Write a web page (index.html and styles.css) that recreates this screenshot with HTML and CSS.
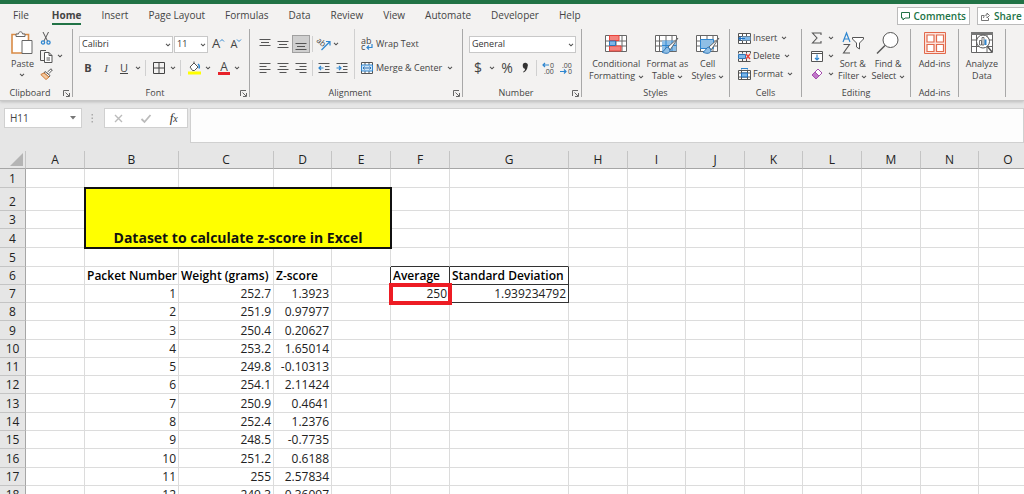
FILE: index.html
```html
<!DOCTYPE html>
<html lang="en">
<head>
  <meta charset="UTF-8">
  <title>Z-score workbook</title>
  <link rel="stylesheet" href="styles.css">
</head>
<body>
  <svg class="defs" aria-hidden="true">
    <symbol id="chev" viewBox="0 0 6 4"><path d="M1 .8l2 2 2-2" fill="none" stroke="#555" stroke-width="1.1"/></symbol>
    <symbol id="launch" viewBox="0 0 7 7"><path d="M.5 6V.5H6M2.5 2.5L6 6M6.5 3v3.5H3" fill="none" stroke="#666"/></symbol>
    <symbol id="grid" viewBox="0 0 22 17"><path d="M.5.5h21v16H.5zM.5 6h21M.5 11h21M4.500.5v16M11 .5v16M17 .5v16" fill="#fff" stroke="#666"/></symbol>
    <symbol id="brush" viewBox="0 0 18 18"><path d="M17 1L7 10l2 3z" fill="#fff" stroke="#666"/><path d="M7 10c-3 0-3 4-6 5 3 2 8 2 8-2z" fill="#8fbfe6" stroke="#2e75b6"/></symbol>
  </svg>

  <header class="ribbon">
    <div class="top">
      <nav class="tabs">
        <a href="#" class="file">File</a>
        <a href="#" class="active">Home</a>
        <a href="#">Insert</a>
        <a href="#">Page Layout</a>
        <a href="#">Formulas</a>
        <a href="#">Data</a>
        <a href="#">Review</a>
        <a href="#">View</a>
        <a href="#">Automate</a>
        <a href="#">Developer</a>
        <a href="#">Help</a>
      </nav>
      <button class="action"><svg width="9" height="9" viewBox="0 0 9 9"><path d="M.5.5h8v5.500H4l-2 2v-2H.5z" fill="none" stroke="#217346"/></svg>Comments</button>
      <button class="action share"><svg width="9" height="9" viewBox="0 0 9 9"><path d="M3 3.500H.5v5h7V6M2.500 6c0-2 1.500-3 3.500-3V1l2.500 2.500L6 6V4.500" fill="none" stroke="#666" stroke-width=".9"/></svg>Share</button>
    </div>

    <div class="groups">
      <section class="group clipboard">
        <div class="body">
          <button class="big">
            <svg width="22" height="24" viewBox="0 0 22 24"><path d="M1 3.500h16.500V22H1z" fill="#fff" stroke="#d98b45" stroke-width="1.600"/><path d="M5 5.500V3h2.500c0-3 4-3 4 0H14v2.500z" fill="#fff" stroke="#666"/><path d="M11 9.500h10v13H11z" fill="#fff" stroke="#666"/></svg>
            <span>Paste</span>
            <svg class="chev"><use href="#chev"/></svg>
          </button>
          <div class="stack">
            <button aria-label="Cut"><svg width="12" height="13" viewBox="0 0 12 13"><path d="M3 0l4.500 9M8.500 0L4 9" fill="none" stroke="#555"/><circle cx="3" cy="10.500" r="1.600" fill="none" stroke="#2e86d0" stroke-width="1.300"/><circle cx="8.500" cy="10.500" r="1.600" fill="none" stroke="#2e86d0" stroke-width="1.300"/></svg></button>
            <button aria-label="Copy"><svg width="13" height="13" viewBox="0 0 13 13"><path d="M5 10.500H.5V.5H6" fill="none" stroke="#555"/><path d="M4.500 2.500H9l3 3v7H4.500zM9 2.500v3h3M6.500 8h3.500M6.500 10h3.500" fill="#fff" stroke="#555"/></svg><svg class="chev"><use href="#chev"/></svg></button>
            <button aria-label="Format Painter"><svg width="13" height="12" viewBox="0 0 13 12"><path d="M7.500 4L11 .8 12.300 2 9 5.500" fill="#fff" stroke="#555"/><path d="M5 3.500l5 4-1 1.500-5-4z" fill="#fff" stroke="#555"/><path d="M4 5L.8 6.500 6 11.500 9 9z" fill="#f3c9a0" stroke="#d07a35"/></svg></button>
          </div>
        </div>
        <footer>Clipboard<svg class="launch"><use href="#launch"/></svg></footer>
      </section>

      <section class="group font">
        <div class="body rows">
          <div class="row">
            <span class="drop face"><select aria-label="Font"><option>Calibri</option></select><svg class="chev"><use href="#chev"/></svg></span>
            <span class="drop size"><select aria-label="Font size"><option>11</option></select><svg class="chev"><use href="#chev"/></svg></span>
            <button class="tool grow" aria-label="Increase font size">A<svg width="4" height="3" viewBox="0 0 4 3"><path d="M0 2.500l2-2 2 2" fill="none" stroke="#2e86d0"/></svg></button>
            <button class="tool shrink" aria-label="Decrease font size">A<svg width="4" height="3" viewBox="0 0 4 3"><path d="M0 .5l2 2 2-2" fill="none" stroke="#2e86d0"/></svg></button>
          </div>
          <div class="row">
            <button class="tool"><b>B</b></button>
            <button class="tool serif"><i>I</i></button>
            <button class="tool"><u>U</u></button>
            <svg class="chev"><use href="#chev"/></svg>
            <i class="bar"></i>
            <button class="tool" aria-label="Borders"><svg width="12" height="12" viewBox="0 0 12 12"><path d="M.5.5h11v11H.5zM6 .5v11M.5 6h11" fill="none" stroke="#444"/></svg></button>
            <svg class="chev"><use href="#chev"/></svg>
            <i class="bar"></i>
            <button class="tool" aria-label="Fill colour"><svg width="13" height="14" viewBox="0 0 13 14"><path d="M2 6l4-4 4 4-3.500 3.500H4.500zM6 2V.5" fill="#fff" stroke="#555"/><path d="M10 3c1.500 1 1.500 3 1 4.500" fill="none" stroke="#2e86d0" stroke-width="1.500"/><path d="M0 10.500h13v3H0z" fill="#ff0"/></svg></button>
            <svg class="chev"><use href="#chev"/></svg>
            <button class="tool colour" aria-label="Font colour">A</button>
            <svg class="chev"><use href="#chev"/></svg>
          </div>
        </div>
        <footer>Font<svg class="launch"><use href="#launch"/></svg></footer>
      </section>

      <section class="group align">
        <div class="body">
          <div class="rows pad">
            <div class="row">
              <button class="tool" aria-label="Top align"><svg width="12" height="14" viewBox="0 0 12 14"><path d="M.5 2.500h11M2 5.500h8M.5 8.500h11" stroke="#555"/></svg></button>
              <button class="tool" aria-label="Middle align"><svg width="12" height="14" viewBox="0 0 12 14"><path d="M.5 4.500h11M2 7.500h8M.5 10.500h11" stroke="#555"/></svg></button>
              <button class="tool pressed" aria-label="Bottom align"><svg width="12" height="14" viewBox="0 0 12 14"><path d="M.5 6.500h11M2 9.500h8M.5 12.500h11" stroke="#555"/></svg></button>
              <i class="bar"></i>
              <button class="tool" aria-label="Orientation"><svg width="14" height="13" viewBox="0 0 14 13"><text x="-1" y="7" font-size="8" transform="rotate(42 4 5)" fill="#444">ab</text><path d="M4.500 12L12.500 4M9 3.500h4v4" fill="none" stroke="#2e86d0" stroke-width="1.200"/></svg></button>
              <svg class="chev"><use href="#chev"/></svg>
            </div>
            <div class="row">
              <button class="tool" aria-label="Align left"><svg width="12" height="12" viewBox="0 0 12 12"><path d="M.5 1.500h11M.5 4.500h7M.5 7.500h11M.5 10.500h7" stroke="#555"/></svg></button>
              <button class="tool" aria-label="Centre"><svg width="12" height="12" viewBox="0 0 12 12"><path d="M.5 1.500h11M2.500 4.500h7M.5 7.500h11M2.500 10.500h7" stroke="#555"/></svg></button>
              <button class="tool" aria-label="Align right"><svg width="12" height="12" viewBox="0 0 12 12"><path d="M.5 1.500h11M4.500 4.500h7M.5 7.500h11M4.500 10.500h7" stroke="#555"/></svg></button>
              <i class="bar"></i>
              <button class="tool" aria-label="Decrease indent"><svg width="12" height="12" viewBox="0 0 12 12"><path d="M.5 1.500h11M7 4.500h4.500M7 7.500h4.500M.5 10.500h11" stroke="#555"/><path d="M5.500 6H1M3 4L1 6l2 2" fill="none" stroke="#2e86d0" stroke-width="1.200"/></svg></button>
              <button class="tool" aria-label="Increase indent"><svg width="12" height="12" viewBox="0 0 12 12"><path d="M.5 1.500h11M7 4.500h4.500M7 7.500h4.500M.5 10.500h11" stroke="#555"/><path d="M.5 6H5M3 4l2 2-2 2" fill="none" stroke="#2e86d0" stroke-width="1.200"/></svg></button>
            </div>
          </div>
          <div class="rows wide">
            <button class="row"><svg width="12" height="14" viewBox="0 0 12 14"><text x="0" y="7" font-size="9" fill="#444">ab</text><text x="0" y="13" font-size="9" fill="#444">c</text><path d="M11 7v3.500H6M8 8.500l-2 2 2 2" fill="none" stroke="#2e86d0" stroke-width="1.200"/></svg>Wrap Text</button>
            <button class="row"><svg width="12" height="12" viewBox="0 0 12 12"><path d="M.5.5h11v11H.5zM4 .5V3M8 .5V3M4 9v2.500M8 9v2.500" fill="#fff" stroke="#555"/><path d="M.5 3h11v6H.5z" fill="#cfe4f6" stroke="#2e86d0"/><path d="M2 6h8M3.500 4.500L2 6l1.500 1.500M8.500 4.500L10 6 8.500 7.500" fill="none" stroke="#2e75b6"/></svg>Merge &amp; Center<svg class="chev"><use href="#chev"/></svg></button>
          </div>
        </div>
        <footer>Alignment<svg class="launch"><use href="#launch"/></svg></footer>
      </section>

      <section class="group number">
        <div class="body rows">
          <div class="row">
            <span class="drop format"><select aria-label="Number format"><option>General</option></select><svg class="chev"><use href="#chev"/></svg></span>
          </div>
          <div class="row">
            <button class="tool sign">$</button>
            <svg class="chev"><use href="#chev"/></svg>
            <button class="tool sign">%</button>
            <button class="tool" aria-label="Comma style"><svg width="7" height="10" viewBox="0 0 7 10"><path d="M.8 3a2.600 2.600 0 1 1 4.800.5C5.500 6 4 8.500 1.500 9.500L1 8.800C2.500 8 3 7 3 5.700 1.500 5.500.8 4.300.8 3z" fill="#333"/></svg></button>
            <i class="bar"></i>
            <button class="tool" aria-label="Increase decimal"><svg width="13" height="13" viewBox="0 0 13 13"><text x="8" y="6" font-size="7" fill="#444">0</text><text x="2" y="12" font-size="7" fill="#444">.00</text><path d="M7 3H1M3 1L1 3l2 2" fill="none" stroke="#2e86d0" stroke-width="1.200"/></svg></button>
            <button class="tool" aria-label="Decrease decimal"><svg width="13" height="13" viewBox="0 0 13 13"><text x="2" y="6" font-size="7" fill="#444">.00</text><text x="8" y="12" font-size="7" fill="#444">0</text><path d="M0 9.500h6M4 7.500l2 2-2 2" fill="none" stroke="#2e86d0" stroke-width="1.200"/></svg></button>
          </div>
        </div>
        <footer>Number<svg class="launch"><use href="#launch"/></svg></footer>
      </section>

      <section class="group styles">
        <div class="body">
          <button class="big">
            <svg width="22" height="24" viewBox="0 0 22 24"><use href="#grid" y="4" width="22" height="17"/><path d="M4.500 4.500H14v5H4.500zM4.500 15H16v5H4.500z" fill="#f4837d" stroke="#e8443c"/><path d="M4.500 10h6v4.500h-6z" fill="#7db7e8" stroke="#2e75b6"/></svg>
            <span>Conditional</span>
            <span>Formatting <svg class="chev"><use href="#chev"/></svg></span>
          </button>
          <button class="big">
            <svg width="24" height="24" viewBox="0 0 24 24"><use href="#grid" y="4" width="22" height="17"/><path d="M7 9.500h14.500V20H7z" fill="#8fbfe6"/><path d="M7 14.500h14.500M11 9.500V20M17 9.500V20" stroke="#2e86d0"/><use href="#brush" x="6" y="6" width="18" height="18"/></svg>
            <span>Format as</span>
            <span>Table <svg class="chev"><use href="#chev"/></svg></span>
          </button>
          <button class="big">
            <svg width="24" height="24" viewBox="0 0 24 24"><use href="#grid" y="4" width="22" height="17"/><path d="M4.500 8.500h13v9h-13z" fill="#8fbfe6" stroke="#2e86d0"/><use href="#brush" x="6" y="6" width="18" height="18"/></svg>
            <span>Cell</span>
            <span>Styles <svg class="chev"><use href="#chev"/></svg></span>
          </button>
        </div>
        <footer>Styles</footer>
      </section>

      <section class="group cells">
        <div class="body stack">
          <button><svg width="13" height="11" viewBox="0 0 13 11"><path d="M.5.5h12v10H.5zM4.500.5v10M8.500.5v10M.5 3.500h12M.5 7.500h12" fill="#fff" stroke="#555"/><path d="M4 3.500h8.500v4H4z" fill="#7db7e8"/><path d="M7 5.500H1M3 3.500l-2 2 2 2" fill="none" stroke="#1f6fbf" stroke-width="1.200"/></svg>Insert <svg class="chev"><use href="#chev"/></svg></button>
          <button><svg width="13" height="11" viewBox="0 0 13 11"><path d="M.5.500h12M.5 10.500h12M.5.5v2M4.500.5v2M8.500.5v2M12.500.5v2M.5 8v2.500M4.500 8v2.500M8.500 8v2.500" stroke="#555"/><path d="M.5 3.500h7v4h-7z" fill="#7db7e8" stroke="#2e75b6"/><path d="M8 3l4 5M12 3L8 8" stroke="#e8443c" stroke-width="1.400"/></svg>Delete <svg class="chev"><use href="#chev"/></svg></button>
          <button><svg width="13" height="12" viewBox="0 0 13 12"><path d="M.5 2.500h12v9H.5zM3.500 2.500v9M9.500 2.500v9M.5 5h12M.5 9h12" fill="#fff" stroke="#555"/><path d="M3.500 5h6v4h-6z" fill="#7db7e8" stroke="#1f6fbf"/><path d="M3.500.5h6M3.500 0v1.500M9.500 0v1.500" stroke="#2e86d0"/></svg>Format <svg class="chev"><use href="#chev"/></svg></button>
        </div>
        <footer>Cells</footer>
      </section>

      <section class="group editing">
        <div class="body">
          <div class="stack">
            <button aria-label="AutoSum"><svg width="12" height="12" viewBox="0 0 12 12"><path d="M10 3V1H1.500l4.500 5-4.500 5H10V9" fill="none" stroke="#555" stroke-width="1.100"/></svg><svg class="chev"><use href="#chev"/></svg></button>
            <button aria-label="Fill"><svg width="12" height="11" viewBox="0 0 12 11"><path d="M.5.500h11v10H.5zM.5 2.500h11" fill="#fff" stroke="#555"/><path d="M6 3.500V9M4 7l2 2 2-2" fill="none" stroke="#2e86d0" stroke-width="1.200"/></svg><svg class="chev"><use href="#chev"/></svg></button>
            <button aria-label="Clear"><svg width="12" height="12" viewBox="0 0 12 12"><path d="M7 1l4 4-6 6-4-4z" fill="#fff" stroke="#a64db0"/><path d="M4 4l4 4-3 3-4-4z" fill="#c078c8" stroke="#a64db0"/></svg><svg class="chev"><use href="#chev"/></svg></button>
          </div>
          <button class="big">
            <svg width="22" height="24" viewBox="0 0 22 24"><path d="M1 11L4.500 2 8 11M2.200 8h4.600" fill="none" stroke="#2e86d0" stroke-width="1.200"/><path d="M1.500 13.500h6L1.500 22H8" fill="none" stroke="#555" stroke-width="1.100"/><path d="M10.500 6.500h11v1.500L17.500 12v6l-3-2v-4l-4-4z" fill="#fff" stroke="#555"/></svg>
            <span>Sort &amp;</span>
            <span>Filter <svg class="chev"><use href="#chev"/></svg></span>
          </button>
          <button class="big">
            <svg width="24" height="24" viewBox="0 0 24 24"><circle cx="14.500" cy="9" r="7.500" fill="#fff" stroke="#555"/><path d="M9 14.500L1 22.500" stroke="#555" stroke-width="1.400"/></svg>
            <span>Find &amp;</span>
            <span>Select <svg class="chev"><use href="#chev"/></svg></span>
          </button>
        </div>
        <footer>Editing</footer>
      </section>

      <section class="group addins">
        <div class="body">
          <button class="big">
            <svg width="22" height="24" viewBox="0 0 22 24"><path d="M.5 1.500h21v21H.5z" fill="#fbe3dc" stroke="#e2694b"/><path d="M3 4h7v7H3zM12.500 4h7v7h-7zM3 13.500h7v7H3zM12.500 13.500h7v7h-7z" fill="#fff" stroke="#e2694b" stroke-width="1.200"/></svg>
            <span>Add-ins</span>
          </button>
        </div>
        <footer>Add-ins</footer>
      </section>

      <section class="group analyze">
        <div class="body">
          <button class="big">
            <svg width="22" height="24" viewBox="0 0 22 24"><path d="M.5 1.500h21v20H.5zM.5 9h21M.5 15.500h21M5.500 4v17.500M16 4v17.500" fill="#fff" stroke="#666"/><path d="M0 1h22v3H0z" fill="#777"/><circle cx="12" cy="10.500" r="6.500" fill="#fff" stroke="#555"/><path d="M8.500 9.500h2V14h-2zM11 6.500h2V14h-2z" fill="#fff" stroke="#555" stroke-width=".8"/><path d="M13.500 8.500h2V14h-2z" fill="#2e86d0"/><path d="M16.500 15.500L21 21" stroke="#555" stroke-width="1.500"/></svg>
            <span>Analyze</span>
            <span>Data</span>
          </button>
        </div>
      </section>
    </div>
  </header>

  <div class="formula-bar">
    <label class="name-box"><input type="text" value="H11" aria-label="Name box"><svg width="6" height="4" viewBox="0 0 6 4"><path d="M0 0h6L3 3.500z" fill="#777"/></svg></label>
    <svg class="dots" width="3" height="9" viewBox="0 0 3 9"><path d="M.5 0h1.500v1.500H.5zM.5 3.500h1.500V5H.5zM.5 7h1.500v1.500H.5z" fill="#aaa"/></svg>
    <div class="entry">
      <button aria-label="Cancel"><svg width="9" height="9" viewBox="0 0 9 9"><path d="M1 1l7 7M8 1L1 8" stroke="#bbb" stroke-width="1.400"/></svg></button>
      <button aria-label="Enter"><svg width="10" height="9" viewBox="0 0 10 9"><path d="M.5 5l3 3L9.500 1" fill="none" stroke="#bbb" stroke-width="1.800"/></svg></button>
      <button class="fx"><i>f<small>x</small></i></button>
    </div>
    <input class="formula" type="text" aria-label="Formula">
  </div>

  <main class="sheet">
    <table>
      <colgroup id="cols"></colgroup>
      <thead><tr id="letters"></tr></thead>
      <tbody id="rows"></tbody>
    </table>
  </main>

  <script>
    // A, B, C ... column widths
    const widths = [59, 94, 95, 58, 59, 59, 119, 59, 58, 59, 58, 59, 59, 58, 59, 59, 59, 59, 59, 59, 59, 59, 59, 59, 59, 59];
    const letters = "ABCDEFGHIJKLMNOPQRSTUVWXYZ";
    const lastRow = 40;

    const weights = [
      ["252.7", "1.3923"], ["251.9", "0.97977"], ["250.4", "0.20627"], ["253.2", "1.65014"],
      ["249.8", "-0.10313"], ["254.1", "2.11424"], ["250.9", "0.4641"], ["252.4", "1.2376"],
      ["248.5", "-0.7735"], ["251.2", "0.6188"], ["255", "2.57834"], ["249.3", "-0.36097"]
    ];

    const cells = {
      B6: ["Packet Number", "head"], C6: ["Weight (grams)", "head"], D6: ["Z-score", "head"],
      F6: ["Average", "head edge-r edge-b"], G6: ["Standard Deviation", "head edge-r edge-b"],
      F7: ["250", "marked"], G7: ["1.939234792", "edge-r edge-b"],
      E6: ["", "edge-r"], F5: ["", "edge-b"], G5: ["", "edge-b"]
    };
    weights.forEach(([grams, z], i) => {
      cells["B" + (i + 7)] = [i + 1, ""];
      cells["C" + (i + 7)] = [grams, ""];
      cells["D" + (i + 7)] = [z, ""];
    });

    document.getElementById("cols").innerHTML = '<col class="row-col">' +
      widths.map(w => `<col style="width:${w}px">`).join("");
    document.getElementById("letters").innerHTML =
      '<th class="corner"><svg width="13" height="13" viewBox="0 0 13 13"><path d="M13 0v13H0z" fill="#b4b4b4"/></svg></th>' +
      [...letters].map(l => `<th>${l}</th>`).join("");

    let html = "";
    for (let r = 1; r <= lastRow; r++) {
      html += `<tr><th>${r}</th>`;
      for (const l of letters) {
        // B2:E4 is merged into the title
        if (r >= 2 && r <= 4 && "BCDE".includes(l)) {
          if (r === 2 && l === "B") html += '<td class="title" colspan="4" rowspan="3">Dataset to calculate z-score in Excel</td>';
          continue;
        }
        const [text, cls] = cells[l + r] || ["", ""];
        html += `<td class="${cls}">${text}</td>`;
      }
      html += "</tr>";
    }
    document.getElementById("rows").innerHTML = html;
  </script>
</body>
</html>
```

FILE: styles.css
```css
* { box-sizing: border-box; }
body { margin: 0; height: 100vh; overflow: hidden; display: flex; flex-direction: column; background: #e6e6e6; color: #444; font: 10px/12px "Open Sans", "Noto Sans", sans-serif; }
button, input, select { font: inherit; color: inherit; border: 0; padding: 0; margin: 0; background: none; }
svg { flex: none; display: block; overflow: visible; }
.defs { position: absolute; width: 0; height: 0; }
.chev { width: 6px; height: 4px; }

/* ribbon */
.ribbon { flex: none; background: #f3f2f1; border-top: 4px solid #217346; border-bottom: 1px solid #c8c8c8; box-shadow: 0 1px 3px #bbb; height: 101px; }
.top { display: flex; height: 25px; padding-top: 3px; }
.tabs { display: flex; gap: 20px; padding-left: 13px; margin-right: auto; }
.tabs a { color: #444; text-decoration: none; height: 18px; line-height: 17px; white-space: nowrap; }
.tabs .file { margin-right: 3px; }
.tabs .active { font-weight: bold; border-bottom: 2px solid #217346; }
.action { display: flex; align-items: center; gap: 4px; height: 18px; padding: 0 3px; margin-right: 7px; border: 1px solid #bbb; background: #fff; color: #217346; font-weight: 600; }
.share { width: 47px; margin-right: 0; border-right: 0; }

.groups { display: flex; height: 68px; font-size: 9px; }
.group { flex: none; display: flex; flex-direction: column; border-right: 1px solid #a8a8a8; }
.group footer { position: relative; height: 11px; line-height: 14px; padding-right: 12px; text-align: center; }
.launch { position: absolute; right: 2px; top: 4px; width: 7px; height: 7px; }
.body { flex: 1; display: flex; }
.group button { white-space: nowrap; }
.big { display: flex; flex-direction: column; align-items: center; height: 52px; padding-top: 2px; }
.big > svg:first-child { margin-bottom: 3px; }
.big > .chev { margin-top: 3px; }
.big .chev, .stack .chev { display: inline-block; vertical-align: middle; }
.stack { display: flex; flex-direction: column; }
.stack button { display: flex; align-items: center; gap: 4px; height: 18px; }
.rows { flex-direction: column; gap: 6px; padding-top: 6px; }
.row { display: flex; align-items: center; height: 18px; }
.tool { display: flex; align-items: center; justify-content: center; width: 18px; height: 18px; font-size: 11px; }
.bar { width: 1px; height: 16px; margin: 0 4px; background: #d0d0d0; }
.drop { position: relative; height: 17px; }
.drop select { appearance: none; width: 100%; height: 17px; padding: 0 2px; border: 1px solid #c8c8c8; background: #fff; color: #333; }
.drop .chev { position: absolute; right: 2px; top: 7px; }

.clipboard { width: 73px; }
.clipboard .big { margin: 0 6px 0 11px; }
.font { width: 177px; }
.font .row { padding-left: 6px; }
.face { width: 94px; margin-right: 1px; }
.size { width: 34px; }
.grow, .shrink { align-items: flex-start; font-size: 13px; line-height: 17px; }
.grow { margin-left: 1px; }
.grow svg, .shrink svg { margin-top: 4px; }
.shrink { font-size: 11px; }
.serif { font-family: "Liberation Serif", serif; }
.colour { width: 12px; height: 14px; margin: 0 2px 0 7px; border-bottom: 3px solid #e8222a; font-size: 12px; line-height: 11px; }
.font .chev { margin-left: 2px; }

.align { width: 213px; }
.pad { display: flex; padding-left: 6px; width: 105px; border-right: 1px solid #d0d0d0; height: 50px; }
.pad .bar { margin: 0 2px; }
.pressed { background: #cfcfcf; border: 1px solid #a0a0a0; }
.wide { display: flex; padding-left: 6px; }
.wide .row { gap: 3px; }
.wide .chev { margin-left: 2px; }

.number { width: 119px; }
.number .row { padding-left: 6px; }
.format { width: 107px; }
.sign { font-size: 14px; }
.number .bar { margin: 0 2px; }
.number .row > .chev { margin: 0 3px 0 2px; }

.styles { width: 148px; }
.styles .body { justify-content: center; gap: 3px; padding-left: 2px; }
.cells { width: 72px; }
.cells .body { padding-left: 8px; }
.cells button, .editing .stack button { gap: 2px; }
.cells .chev { margin-left: 2px; }
.styles footer, .cells footer, .editing footer, .addins footer { padding: 0; }
.editing { width: 109px; }
.editing .body { padding-left: 9px; gap: 4px; }
.editing .stack button { gap: 5px; }
.addins { width: 48px; }
.analyze { width: 47px; }
.addins .body, .analyze .body { justify-content: center; }

/* formula bar */
.formula-bar { flex: none; display: flex; align-items: flex-start; padding: 7px 0 8px 4px; height: 50px; }
.name-box { display: flex; align-items: center; width: 78px; height: 20px; padding: 0 5px; border: 1px solid #d0d0d0; background: #fff; }
.name-box input { flex: 1; min-width: 0; }
.dots { margin: 6px 10px 0 9px; }
.entry { display: flex; align-items: center; justify-content: space-around; width: 84px; height: 20px; border: 1px solid #d0d0d0; background: #fff; margin-right: 2px; }
.fx { font-family: "Liberation Serif", serif; font-size: 13px; color: #333; }
.fx small { font-size: 10px; }
.formula { flex: 1; height: 35px; border: 1px solid #d0d0d0; background: #fdfdfd; }

/* sheet */
.sheet { flex: 1; min-height: 0; overflow: hidden; }
table { table-layout: fixed; width: 1px; border-collapse: separate; border-spacing: 0; background: #fff; color: #222; font: 12px/15px "Open Sans", "Noto Sans", sans-serif; }
.row-col { width: 26px; }
tr { height: 18px; }
tbody tr:nth-child(1), tbody tr:nth-child(4), tbody tr:nth-child(5), tbody tr:nth-child(9), tbody tr:nth-child(13), tbody tr:nth-child(16) { height: 19px; }
tbody tr:nth-child(2) { height: 23px; }
th { padding: 0 0 1px; background: #e6e6e6; font-weight: normal; border-right: 1px solid #c4c4c4; border-bottom: 1px solid #a6a6a6; vertical-align: bottom; }
tbody th { border-right-color: #a6a6a6; border-bottom-color: #c4c4c4; }
.corner svg { margin: 0 2px 1px auto; }
td { padding: 0 2px 1px; text-align: right; vertical-align: bottom; white-space: nowrap; border-right: 1px solid #dcdcdc; border-bottom: 1px solid #dcdcdc; }
.head { text-align: left; font-weight: 600; color: #000; }
.title { background: #ff0; border: 0; outline: 2px solid #111; outline-offset: -1px; text-align: center; font-size: 14px; line-height: 19px; font-weight: bold; color: #111; }
.edge-r { border-right-color: #333; }
.edge-b { border-bottom-color: #333; }
.marked { outline: 4px solid #ed1c24; outline-offset: -2px; }
```
